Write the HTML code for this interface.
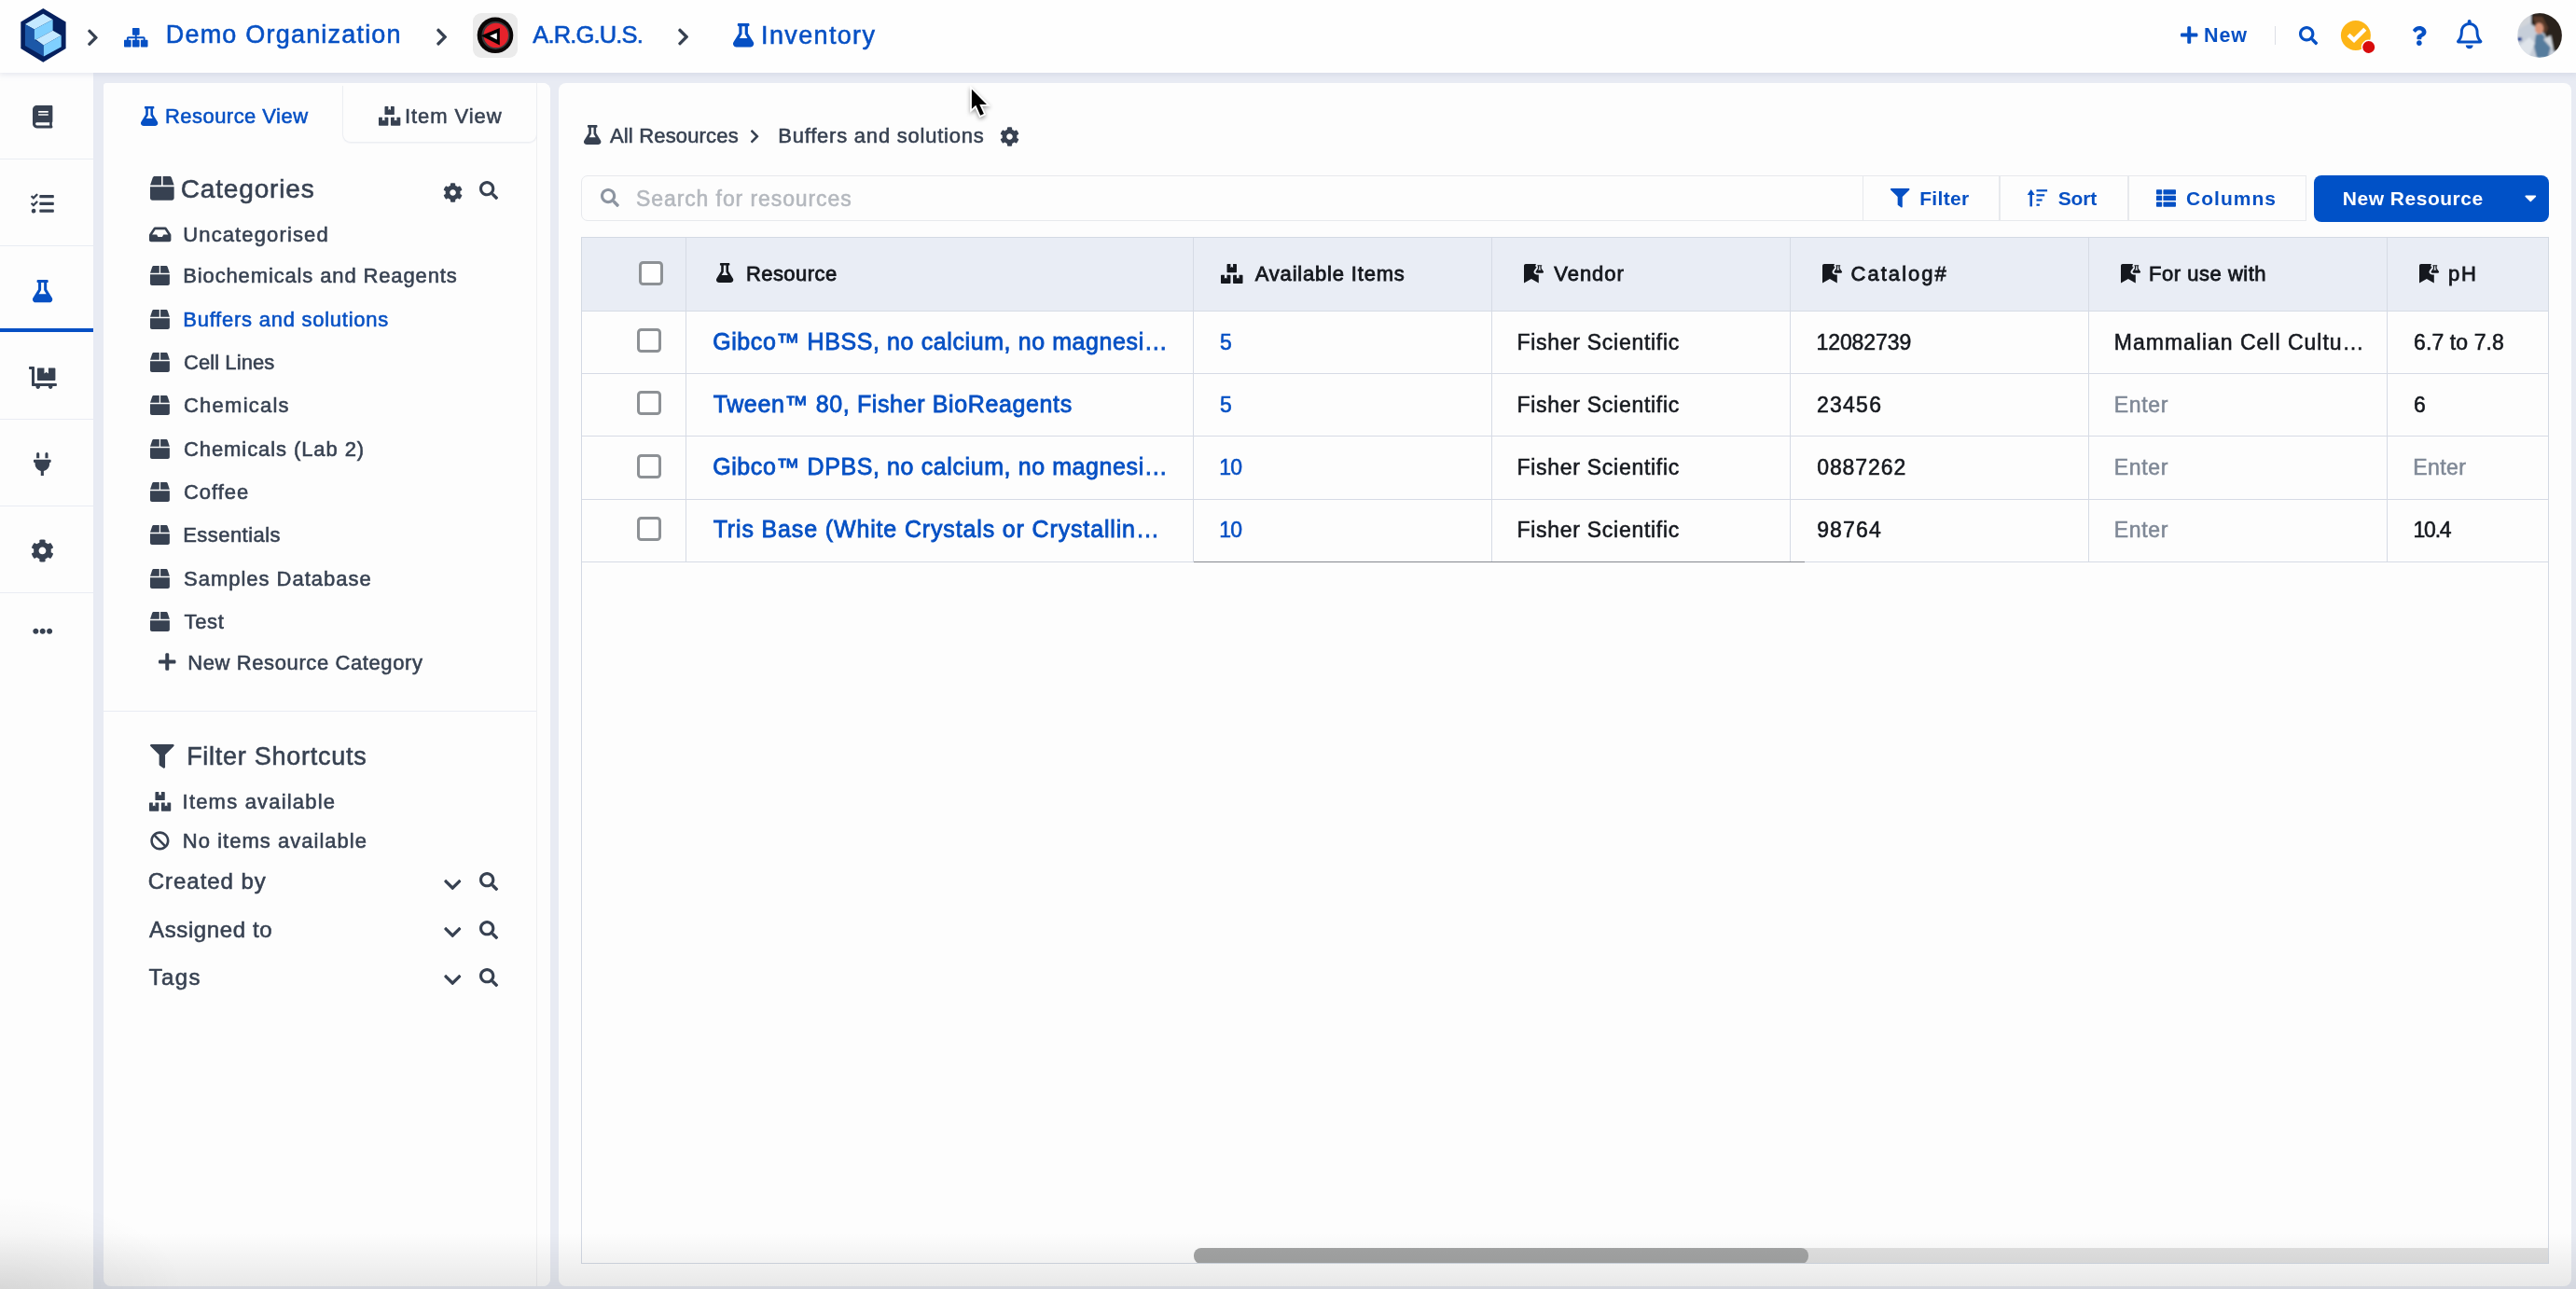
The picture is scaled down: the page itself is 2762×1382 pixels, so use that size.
<!DOCTYPE html>
<html lang="en">
<head>
<meta charset="utf-8">
<title>Inventory - Buffers and solutions</title>
<style>
html,body{margin:0;padding:0}
body{will-change:transform;width:2762px;height:1382px;position:relative;overflow:hidden;background:#e8ebf3;font-family:"Liberation Sans", sans-serif;-webkit-font-smoothing:antialiased}
ul,li{margin:0;padding:0;list-style:none}
.ic{position:absolute;display:block;overflow:visible}
.t{position:absolute;white-space:nowrap;line-height:1;-webkit-text-stroke:.55px currentColor}
header.top{position:absolute;left:0;top:0;width:2762px;height:78px;background:#fefefe;box-shadow:0 1px 6px 1px rgba(170,176,200,.28);z-index:3}
nav.side{position:absolute;left:0;top:0;width:100px;height:1382px;background:#fdfdfd;z-index:2}
.hdiv{position:absolute;height:1px;background:#e9ecf3}
.vdiv{position:absolute;width:1px;background:#dcdfe5}
.active{position:absolute;background:#0650c4}
.bg-lp{position:absolute;left:111px;top:89px;width:479px;height:1289.5px;border-radius:3px 8px 8px 8px;background:#fdfdfd}
.bg-lp-strip{position:absolute;left:575px;top:89px;width:15px;height:1289.5px;border-radius:0 8px 8px 0;border-left:1px solid #eeeff1;box-sizing:border-box;background:#fdfdfd}
.bg-mp{position:absolute;left:599px;top:89px;width:2158px;height:1289.5px;border-radius:8px;background:#fdfdfd}
.tab2{position:absolute;left:367px;top:92px;width:209px;height:61px;box-sizing:border-box;border:1px solid #eceef2;border-top:none;border-radius:0 0 9px 9px;background:#fdfdfd;box-shadow:0 1px 1px rgba(215,220,232,.25)}
.lp-inner-border{display:none}
.search{position:absolute;left:623px;top:188px;width:1375px;height:49px;box-sizing:border-box;border:1px solid #e7e9ed;border-radius:7px 0 0 7px;background:#fdfdfd}
.tbtn{position:absolute;top:188px;height:49px;box-sizing:border-box;border:1px solid #e7e9ed;background:#fdfdfd}
.newbtn{position:absolute;left:2481px;top:187.8px;width:252.300px;height:50.2px;border-radius:8px;background:#0051c7}
.tbl{position:absolute;left:623px;top:254px;width:2110px;height:1100.5px;box-sizing:border-box;border:1px solid #d3d9e3;background:#fdfdfd;overflow:hidden}
.thead{position:absolute;left:0;top:0;width:100%;height:79px;background:#e9edf5}
.rline{position:absolute;left:0;width:100%;height:1px;background:#d6dbe5;margin-top:-1px}
.cline{position:absolute;top:0;height:348px;width:1px;background:#d6dbe5;margin-left:-1px}
.sbtrack{position:absolute;left:1300px;width:810px;top:1083px;height:16.5px;background:#e1e1e1}
.sbthumb{position:absolute;left:656px;width:659px;top:1083px;height:16.5px;border-radius:8px;background:#a3a4a4}
.stickyline{position:absolute;left:656px;width:655px;top:347.2px;height:1.2px;background:#85888e}
.cb{position:absolute;width:26px;height:26px;box-sizing:border-box;border:3px solid #8d9195;border-radius:4.5px;background:#fefefe}
.vig{position:absolute;left:0;top:1322px;width:2762px;height:60px;background:linear-gradient(180deg,rgba(0,0,0,0),rgba(0,0,0,.085));z-index:5;pointer-events:none}
.vig2{position:absolute;left:0;top:1282px;width:200px;height:100px;background:radial-gradient(ellipse at 0% 100%,rgba(0,0,0,.07),rgba(0,0,0,0) 70%);z-index:5;pointer-events:none}

</style>
</head>
<body>
<div class="bg-lp"></div><div class="bg-lp-strip"></div><div class="bg-mp"></div>
<nav class="side">
<div class="hdiv" style="left:0;top:170px;width:100px"></div>
<div class="hdiv" style="left:0;top:263px;width:100px"></div>
<div class="hdiv" style="left:0;top:448.5px;width:100px"></div>
<div class="hdiv" style="left:0;top:542px;width:100px"></div>
<div class="hdiv" style="left:0;top:635px;width:100px"></div>
<div class="active" style="left:0;top:351.5px;width:100px;height:4px"></div>
<svg class="ic" style="left:34.86px;top:113.43px" width="21.38" height="24.44" viewBox="0 0 448 512"><path fill="#374151" d="M448 360V24c0-13.300-10.700-24-24-24H96C43 0 0 43 0 96v320c0 53 43 96 96 96h328c13.300 0 24-10.700 24-24v-16c0-7.500-3.500-14.300-8.900-18.700-4.200-15.400-4.200-59.300 0-74.700 5.400-4.300 8.900-11.100 8.900-18.600zM128 134c0-3.300 2.700-6 6-6h212c3.300 0 6 2.700 6 6v20c0 3.300-2.700 6-6 6H134c-3.300 0-6-2.700-6-6v-20zm0 64c0-3.300 2.700-6 6-6h212c3.300 0 6 2.700 6 6v20c0 3.300-2.700 6-6 6H134c-3.300 0-6-2.700-6-6v-20zm253.400 250H96c-17.700 0-32-14.300-32-32 0-17.600 14.400-32 32-32h285.400c-1.900 17.100-1.900 46.900 0 64z"/></svg>
<svg class="ic" style="left:33.39px;top:206.37px" width="24.83" height="24.83" viewBox="0 0 512 512"><path fill="#374151" d="M139.610 35.500a12 12 0 0 0-17 0L58.930 98.810l-22.700-22.120a12 12 0 0 0-17 0L3.530 92.410a12 12 0 0 0 0 17l47.590 47.400a12.780 12.780 0 0 0 17.610 0l15.590-15.620L156.520 69a12.090 12.090 0 0 0 .09-17zm0 159.190a12 12 0 0 0-17 0l-63.680 63.720-22.700-22.100a12 12 0 0 0-17 0L3.530 252a12 12 0 0 0 0 17L51 316.500a12.770 12.770 0 0 0 17.600 0l15.700-15.690 72.200-72.220a12 12 0 0 0 .09-16.900zM64 368c-26.490 0-48.590 21.500-48.590 48S37.530 464 64 464a48 48 0 0 0 0-96zm432 16H208a16 16 0 0 0-16 16v32a16 16 0 0 0 16 16h288a16 16 0 0 0 16-16v-32a16 16 0 0 0-16-16zm0-320H208a16 16 0 0 0-16 16v32a16 16 0 0 0 16 16h288a16 16 0 0 0 16-16V80a16 16 0 0 0-16-16zm0 160H208a16 16 0 0 0-16 16v32a16 16 0 0 0 16 16h288a16 16 0 0 0 16-16v-32a16 16 0 0 0-16-16z"/></svg>
<svg class="ic" style="left:34.92px;top:299.66px" width="21.25" height="24.29" viewBox="0 0 448 512"><path fill="#0650c4" d="M437.2 403.5L320 215V64h8c13.3 0 24-10.7 24-24V24c0-13.3-10.7-24-24-24H120c-13.3 0-24 10.7-24 24v16c0 13.3 10.7 24 24 24h8v151L10.8 403.5C-18.5 450.6 15.3 512 70.9 512h306.2c55.700 0 89.400-61.500 60.100-108.500zM137.900 320l48.200-77.600c3.700-5.200 5.800-11.600 5.800-18.400V64h64v160c0 6.900 2.200 13.200 5.800 18.400l48.200 77.600h-172z"/></svg>
<svg class="ic" style="left:31.20px;top:392.84px" width="29.90" height="23.92" viewBox="0 0 640 512"><path fill="#374151" d="M208 320h384c8.800 0 16-7.200 16-16V48c0-8.800-7.200-16-16-16H448v128l-48-32-48 32V32H208c-8.800 0-16 7.200-16 16v256c0 8.800 7.200 16 16 16zm416 64H128V16c0-8.800-7.200-16-16-16H16C7.200 0 0 7.200 0 16v32c0 8.800 7.200 16 16 16h48v368c0 8.800 7.200 16 16 16h82.900c-1.800 5-2.900 10.400-2.900 16 0 26.500 21.500 48 48 48s48-21.500 48-48c0-5.600-1.200-11-2.900-16H451c-1.800 5-2.900 10.400-2.900 16 0 26.500 21.500 48 48 48s48-21.500 48-48c0-5.600-1.200-11-2.900-16H624c8.800 0 16-7.200 16-16v-32c0-8.800-7.200-16-16-16z"/></svg>
<svg class="ic" style="left:36.37px;top:485.21px" width="18.66" height="24.88" viewBox="0 0 384 512"><path fill="#374151" d="M320 32a32 32 0 0 0-64 0v96h64zm48 128H16a16 16 0 0 0-16 16v32a16 16 0 0 0 16 16h16v32a160.070 160.070 0 0 0 128 156.800V512h64v-99.200A160.070 160.070 0 0 0 352 256v-32h16a16 16 0 0 0 16-16v-32a16 16 0 0 0-16-16zM128 32a32 32 0 0 0-64 0v96h64z"/></svg>
<svg class="ic" style="left:33.24px;top:578.14px" width="24.93" height="24.93" viewBox="0 0 512 512"><path fill="#374151" d="M487.400 315.700l-42.600-24.600c4.300-23.200 4.300-47 0-70.200l42.600-24.600c4.900-2.800 7.100-8.600 5.500-14-11.100-35.600-30-67.800-54.700-94.600-3.800-4.100-10-5.100-14.800-2.300L380.800 110c-17.900-15.400-38.500-27.300-60.800-35.100V25.800c0-5.600-3.900-10.500-9.400-11.700-36.700-8.200-74.300-7.800-109.200 0-5.500 1.200-9.400 6.100-9.400 11.700V75c-22.200 7.900-42.800 19.800-60.800 35.100L88.700 85.500c-4.900-2.800-11-1.900-14.800 2.300-24.700 26.700-43.600 58.900-54.700 94.600-1.700 5.400.6 11.200 5.500 14L67.300 221c-4.300 23.200-4.300 47 0 70.200l-42.600 24.600c-4.900 2.800-7.100 8.600-5.500 14 11.100 35.600 30 67.800 54.700 94.600 3.800 4.100 10 5.100 14.800 2.300l42.600-24.600c17.900 15.400 38.500 27.300 60.800 35.100v49.200c0 5.600 3.900 10.500 9.400 11.700 36.700 8.200 74.300 7.800 109.200 0 5.500-1.200 9.400-6.100 9.400-11.700v-49.200c22.200-7.900 42.800-19.800 60.800-35.100l42.600 24.600c4.900 2.800 11 1.900 14.800-2.300 24.700-26.700 43.600-58.900 54.700-94.600 1.500-5.500-.7-11.300-5.600-14.100zM256 336c-44.100 0-80-35.900-80-80s35.900-80 80-80 80 35.900 80 80-35.900 80-80 80z"/></svg>
<svg class="ic" style="left:34.66px;top:666.36px" width="21.48" height="21.48" viewBox="0 0 512 512"><path fill="#374151" d="M328 256c0 39.800-32.200 72-72 72s-72-32.200-72-72 32.200-72 72-72 72 32.200 72 72zm104-72c-39.800 0-72 32.200-72 72s32.200 72 72 72 72-32.200 72-72-32.200-72-72-72zm-352 0c-39.800 0-72 32.200-72 72s32.200 72 72 72 72-32.200 72-72-32.200-72-72-72z"/></svg>
</nav>
<header class="top">
<svg class="ic" style="left:20px;top:6px" width="54" height="64" viewBox="20 6 54 64">
<polygon points="46.3,9.1 70.6,23.5 70.6,52.1 46.3,66.7 22.3,52.1 22.3,23.5" fill="#05205e"/>
<polygon points="46.3,14.8 56.6,20.9 36.9,31.5 26.9,26" fill="#c4e9ff"/>
<polygon points="26.9,26 36.9,31.5 36.9,42.4 46.9,48.4 46.9,60.5 26.9,49" fill="#1c58a8"/>
<polygon points="36.9,31.5 56.6,20.9 56.6,32.7 38.5,42.6 36.9,42.4" fill="#7fd0ff"/>
<polygon points="38.5,42.6 56.6,32.7 65.7,38.1 46.9,48.4" fill="#c4e9ff"/>
<polygon points="46.9,48.4 65.7,38.1 65.7,50.2 46.9,60.5" fill="#7fd0ff"/>
</svg>
<svg class="ic" style="left:93.05px;top:29.68px" width="12.90" height="20.64" viewBox="0 0 320 512"><path fill="#374151" d="M285.476 272.971L91.132 467.314c-9.373 9.373-24.569 9.373-33.941 0l-22.667-22.667c-9.357-9.357-9.375-24.522-.04-33.901L188.505 256 34.484 101.255c-9.335-9.379-9.317-24.544.04-33.901l22.667-22.667c9.373-9.373 24.569-9.373 33.941 0L285.475 239.030c9.373 9.372 9.373 24.568.001 33.941z"/></svg>
<svg class="ic" style="left:133.25px;top:29.80px" width="25.50" height="20.40" viewBox="0 0 640 512"><path fill="#0650c4" d="M616 320h-48v-48c0-22.056-17.944-40-40-40H344v-40h48c13.255 0 24-10.745 24-24V24c0-13.255-10.745-24-24-24H248c-13.255 0-24 10.745-24 24v144c0 13.255 10.745 24 24 24h48v40H112c-22.056 0-40 17.944-40 40v48H24c-13.255 0-24 10.745-24 24v144c0 13.255 10.745 24 24 24h144c13.255 0 24-10.745 24-24V344c0-13.255-10.745-24-24-24h-48v-40h176v40h-48c-13.255 0-24 10.745-24 24v144c0 13.255 10.745 24 24 24h144c13.255 0 24-10.745 24-24V344c0-13.255-10.745-24-24-24h-48v-40h176v40h-48c-13.255 0-24 10.745-24 24v144c0 13.255 10.745 24 24 24h144c13.255 0 24-10.745 24-24V344c0-13.255-10.745-24-24-24z"/></svg>
<span class="t " id="t0" style="left:177.75px;top:24.00px;color:#0650c4;font-size:27.0px;letter-spacing:1.203px;">Demo Organization</span>
<svg class="ic" style="left:466.50px;top:29.32px" width="13.29" height="21.27" viewBox="0 0 320 512"><path fill="#374151" d="M285.476 272.971L91.132 467.314c-9.373 9.373-24.569 9.373-33.941 0l-22.667-22.667c-9.357-9.357-9.375-24.522-.04-33.901L188.505 256 34.484 101.255c-9.335-9.379-9.317-24.544.04-33.901l22.667-22.667c9.373-9.373 24.569-9.373 33.941 0L285.475 239.030c9.373 9.372 9.373 24.568.001 33.941z"/></svg>
<svg class="ic" style="left:507px;top:14px" width="48" height="48" viewBox="507 14 48 48">
<rect x="507" y="14" width="48" height="48" rx="9" fill="#ebebeb"/>
<circle cx="531" cy="37.8" r="19.3" fill="#0a0606"/>
<circle cx="531.5" cy="37.9" r="15" fill="#3b3b3d"/>
<circle cx="531.8" cy="37.9" r="13.2" fill="#e6222b"/>
<polygon points="515.8,38.3 535.8,29.9 535.8,48.5 " fill="#000"/>
<polygon points="525.1,38.6 532.8,35.3 532.8,42.6" fill="#fff"/>
</svg>
<span class="t ns" id="t1" style="left:571.30px;top:25.00px;color:#0650c4;font-size:25.5px;letter-spacing:-0.839px;">A.R.G.U.S.</span>
<svg class="ic" style="left:725.86px;top:29.41px" width="13.17" height="21.07" viewBox="0 0 320 512"><path fill="#374151" d="M285.476 272.971L91.132 467.314c-9.373 9.373-24.569 9.373-33.941 0l-22.667-22.667c-9.357-9.357-9.375-24.522-.04-33.901L188.505 256 34.484 101.255c-9.335-9.379-9.317-24.544.04-33.901l22.667-22.667c9.373-9.373 24.569-9.373 33.941 0L285.475 239.030c9.373 9.372 9.373 24.568.001 33.941z"/></svg>
<svg class="ic" style="left:786.01px;top:24.67px" width="22.27" height="25.46" viewBox="0 0 448 512"><path fill="#0650c4" d="M437.2 403.5L320 215V64h8c13.3 0 24-10.7 24-24V24c0-13.3-10.7-24-24-24H120c-13.3 0-24 10.7-24 24v16c0 13.3 10.7 24 24 24h8v151L10.8 403.5C-18.5 450.6 15.3 512 70.9 512h306.2c55.700 0 89.400-61.500 60.100-108.500zM137.900 320l48.200-77.600c3.700-5.200 5.800-11.600 5.800-18.400V64h64v160c0 6.900 2.200 13.200 5.800 18.400l48.200 77.600h-172z"/></svg>
<span class="t " id="t2" style="left:816.10px;top:25.00px;color:#0650c4;font-size:27.0px;letter-spacing:1.350px;">Inventory</span>
<svg class="ic" style="left:2337.62px;top:26.76px" width="18.45" height="21.09" viewBox="0 0 448 512"><path fill="#0650c4" d="M416 208H272V64c0-17.670-14.330-32-32-32h-32c-17.670 0-32 14.330-32 32v144H32c-17.670 0-32 14.330-32 32v32c0 17.670 14.330 32 32 32h144v144c0 17.670 14.330 32 32 32h32c17.670 0 32-14.330 32-32V304h144c17.670 0 32-14.330 32-32v-32c0-17.670-14.330-32-32-32z"/></svg>
<span class="t " id="t3" style="left:2363.00px;top:28.00px;color:#0650c4;font-size:21.5px;font-weight:700;-webkit-text-stroke:0;letter-spacing:0.875px;">New</span>
<div class="vdiv" style="left:2438.5px;top:28px;height:20px"></div>
<svg class="ic" style="left:2464.90px;top:27.90px" width="20.20" height="20.20" viewBox="0 0 512 512"><path fill="#0650c4" d="M505 442.7L405.3 343c-4.500-4.500-10.600-7-17-7H372c27.600-35.300 44-79.700 44-128C416 93.100 322.900 0 208 0S0 93.100 0 208s93.100 208 208 208c48.300 0 92.700-16.400 128-44v16.300c0 6.400 2.500 12.500 7 17l99.700 99.700c9.400 9.400 24.600 9.400 33.900 0l28.300-28.300c9.400-9.400 9.400-24.600.1-34zM208 336c-70.700 0-128-57.200-128-128 0-70.700 57.200-128 128-128 70.700 0 128 57.200 128 128 0 70.700-57.200 128-128 128z"/></svg>
<svg class="ic" style="left:2506px;top:18px" width="44" height="44" viewBox="2506 18 44 44">
<circle cx="2525.9" cy="38" r="16" fill="#fdb517"/>
<polyline points="2518,37.4 2524,43 2535.8,31.2" fill="none" stroke="#fff" stroke-width="4.4"/>
<circle cx="2539.7" cy="50.5" r="7.9" fill="#fff"/>
<circle cx="2539.700" cy="50.5" r="6.5" fill="#d80c0c"/>
</svg>
<svg class="ic" style="left:2585.62px;top:27.73px" width="15.78" height="21.04" viewBox="0 0 384 512"><path fill="#0650c4" d="M202.021 0C122.202 0 70.503 32.703 29.914 91.026c-7.363 10.580-5.093 25.086 5.178 32.874l43.138 32.709c10.373 7.865 25.132 6.026 33.253-4.148 25.049-31.381 43.630-49.449 82.757-49.449 30.764 0 68.816 19.799 68.816 49.631 0 22.552-18.617 34.134-48.993 51.164-35.423 19.860-82.299 44.576-82.299 106.405V320c0 13.255 10.745 24 24 24h72.471c13.255 0 24-10.745 24-24v-5.773c0-42.860 125.268-44.645 125.268-160.627C377.504 66.256 286.902 0 202.021 0zM192 373.459c-38.196 0-69.271 31.075-69.271 69.271 0 38.195 31.075 69.270 69.271 69.270s69.271-31.075 69.271-69.271-31.075-69.270-69.271-69.270z"/></svg>
<svg class="ic" style="left:2634.28px;top:21.37px" width="27.43" height="31.35" viewBox="0 0 448 512"><path fill="#0650c4" d="M439.390 362.290c-19.320-20.760-55.470-51.990-55.470-154.290 0-77.700-54.480-139.900-127.940-155.160V32c0-17.670-14.320-32-31.980-32s-31.980 14.330-31.980 32v20.840C118.560 68.100 64.080 130.300 64.080 208c0 102.300-36.150 133.530-55.470 154.290-6 6.450-8.660 14.160-8.610 21.710.11 16.400 12.980 32 32.100 32h383.800c19.120 0 32-15.600 32.100-32 .05-7.550-2.610-15.270-8.610-21.710zM67.530 368c21.220-27.970 44.420-74.330 44.530-159.420 0-.2-.06-.38-.06-.58 0-61.860 50.140-112 112-112s112 50.140 112 112c0 .2-.06.38-.06.58.11 85.100 23.310 131.460 44.530 159.420H67.530zM224 512c35.320 0 63.970-28.650 63.970-64H160.030c0 35.350 28.650 64 63.970 64z"/></svg>
<svg class="ic" style="left:2699px;top:14px" width="48" height="48" viewBox="2699 14 48 48">
<defs><clipPath id="av"><circle cx="2723" cy="38" r="23.9"/></clipPath></defs>
<defs><filter id="avb" x="-10%" y="-10%" width="120%" height="120%"><feGaussianBlur stdDeviation="0.9"/></filter></defs><g clip-path="url(#av)"><g filter="url(#avb)">
<rect x="2699" y="14" width="48" height="48" fill="#c6ced9"/>
<polygon points="2713,24 2699,32 2699,14 2713,14" fill="#d2d5da"/>
<polygon points="2714,14 2714,26 2716,27 2727.7,35.8 2738,54.5 2750,56 2750,10" fill="#2a241d"/>
<polygon points="2716,18 2726,18 2732,30 2729,36 2720,30" fill="#5a3a2c"/>
<ellipse cx="2722.5" cy="30.5" rx="4.6" ry="6" fill="#d8957a"/>
<polygon points="2719,37 2726,36 2735,50 2732,62 2720,62 2717,50" fill="#4a7396" opacity=".9"/>
<polygon points="2700,50 2712,40 2718,46 2712,60 2703,58" fill="#dfe4ea"/>
<polygon points="2727,42 2735,38 2738,54 2734,50" fill="#d5d9df"/>
<rect x="2699" y="40" width="5" height="4" fill="#28509a"/>
</g></g></svg>
</header>
<aside class="panel lp">
<div class="tab2"></div>
<div class="lp-inner-border"></div>
<svg class="ic" style="left:151.17px;top:113.81px" width="18.27" height="20.88" viewBox="0 0 448 512"><path fill="#0650c4" d="M437.2 403.5L320 215V64h8c13.3 0 24-10.7 24-24V24c0-13.3-10.7-24-24-24H120c-13.3 0-24 10.7-24 24v16c0 13.3 10.7 24 24 24h8v151L10.8 403.5C-18.5 450.6 15.3 512 70.9 512h306.2c55.700 0 89.400-61.500 60.100-108.500zM137.900 320l48.200-77.600c3.700-5.200 5.800-11.600 5.800-18.400V64h64v160c0 6.900 2.200 13.200 5.800 18.400l48.200 77.600h-172z"/></svg>
<span class="t " id="t4" style="left:176.95px;top:114.00px;color:#0650c4;font-size:22.0px;letter-spacing:0.463px;">Resource View</span>
<svg class="ic" style="left:405.93px;top:113.88px" width="23.33" height="20.74" viewBox="0 0 576 512"><path fill="#374151" d="M560 288h-80v96l-32-21.300-32 21.300v-96h-80c-8.800 0-16 7.200-16 16v192c0 8.800 7.200 16 16 16h224c8.800 0 16-7.200 16-16V304c0-8.800-7.200-16-16-16zm-384-64h224c8.800 0 16-7.200 16-16V16c0-8.800-7.200-16-16-16h-80v96l-32-21.300L256 96V0h-80c-8.800 0-16 7.200-16 16v192c0 8.800 7.200 16 16 16zm64 64h-80v96l-32-21.300L96 384v-96H16c-8.800 0-16 7.200-16 16v192c0 8.800 7.200 16 16 16h224c8.800 0 16-7.200 16-16V304c0-8.800-7.200-16-16-16z"/></svg>
<span class="t " id="t5" style="left:434.00px;top:114.00px;color:#374151;font-size:22.0px;letter-spacing:0.919px;">Item View</span>
<svg class="ic" style="left:161.47px;top:189.42px" width="25.65" height="25.65" viewBox="0 0 512 512"><path fill="#374151" d="M509.5 184.600L458.900 32.800C452.400 13.200 434.100 0 413.400 0H272v192h238.700c-.4-2.500-.4-5-1.200-7.400zM240 0H98.600c-20.700 0-39 13.200-45.500 32.800L2.500 184.600c-.8 2.400-.8 4.900-1.200 7.400H240V0zM0 224v240c0 26.500 21.500 48 48 48h416c26.500 0 48-21.500 48-48V224H0z"/></svg>
<span class="t " id="t6" style="left:193.80px;top:189.00px;color:#374151;font-size:28.0px;letter-spacing:0.833px;">Categories</span>
<svg class="ic" style="left:474.99px;top:196.39px" width="21.13" height="21.13" viewBox="0 0 512 512"><path fill="#374151" d="M487.400 315.700l-42.600-24.600c4.300-23.200 4.300-47 0-70.200l42.600-24.600c4.900-2.800 7.100-8.600 5.500-14-11.100-35.600-30-67.800-54.700-94.600-3.800-4.100-10-5.100-14.800-2.300L380.800 110c-17.900-15.400-38.500-27.300-60.800-35.100V25.800c0-5.600-3.900-10.500-9.400-11.700-36.700-8.200-74.300-7.800-109.200 0-5.500 1.200-9.400 6.100-9.400 11.700V75c-22.200 7.900-42.800 19.800-60.800 35.100L88.700 85.500c-4.900-2.800-11-1.900-14.800 2.300-24.700 26.700-43.600 58.900-54.700 94.600-1.700 5.400.6 11.200 5.500 14L67.300 221c-4.300 23.200-4.300 47 0 70.200l-42.600 24.600c-4.900 2.800-7.100 8.600-5.500 14 11.100 35.600 30 67.800 54.700 94.600 3.800 4.100 10 5.100 14.800 2.300l42.600-24.600c17.900 15.400 38.500 27.300 60.800 35.100v49.200c0 5.600 3.900 10.500 9.400 11.700 36.700 8.200 74.300 7.800 109.200 0 5.500-1.200 9.400-6.100 9.400-11.700v-49.200c22.200-7.900 42.800-19.800 60.800-35.100l42.600 24.600c4.900 2.800 11 1.900 14.800-2.300 24.700-26.700 43.600-58.900 54.700-94.600 1.500-5.500-.7-11.300-5.600-14.100zM256 336c-44.100 0-80-35.900-80-80s35.900-80 80-80 80 35.900 80 80-35.900 80-80 80z"/></svg>
<svg class="ic" style="left:513.68px;top:194.42px" width="20.05" height="20.05" viewBox="0 0 512 512"><path fill="#374151" d="M505 442.7L405.3 343c-4.500-4.500-10.600-7-17-7H372c27.600-35.300 44-79.700 44-128C416 93.100 322.900 0 208 0S0 93.100 0 208s93.100 208 208 208c48.300 0 92.700-16.400 128-44v16.300c0 6.400 2.500 12.500 7 17l99.700 99.700c9.400 9.400 24.600 9.400 33.900 0l28.300-28.300c9.400-9.400 9.400-24.600.1-34zM208 336c-70.700 0-128-57.200-128-128 0-70.700 57.200-128 128-128 70.700 0 128 57.200 128 128 0 70.700-57.200 128-128 128z"/></svg>
<ul class="cats">
<li>
<svg class="ic" style="left:159.70px;top:240.60px" width="23.40" height="20.80" viewBox="0 0 576 512"><path fill="#374151" d="M567.938 243.908L462.250 85.374A48.003 48.003 0 0 0 422.311 64H153.689a48 48 0 0 0-39.938 21.374L8.062 243.908A47.994 47.994 0 0 0 0 270.533V400c0 26.510 21.490 48 48 48h480c26.510 0 48-21.490 48-48V270.533a47.994 47.994 0 0 0-8.062-26.625zM162.252 128h251.497l85.333 128H376l-32 64H232l-32-64H76.918l85.334-128z"/></svg>
<span class="t " id="t7" style="left:196.25px;top:241.00px;color:#374151;font-size:22.0px;letter-spacing:1.129px;">Uncategorised</span>
</li>
<li>
<svg class="ic" style="left:161.15px;top:284.85px" width="20.90" height="20.90" viewBox="0 0 512 512"><path fill="#374151" d="M509.5 184.600L458.900 32.800C452.400 13.200 434.100 0 413.400 0H272v192h238.700c-.4-2.500-.4-5-1.200-7.400zM240 0H98.600c-20.700 0-39 13.200-45.500 32.800L2.500 184.600c-.8 2.400-.8 4.900-1.200 7.400H240V0zM0 224v240c0 26.500 21.500 48 48 48h416c26.500 0 48-21.500 48-48V224H0z"/></svg>
<span class="t " id="t8" style="left:196.25px;top:285.00px;color:#374151;font-size:22.0px;letter-spacing:0.865px;">Biochemicals and Reagents</span>
</li>
<li>
<svg class="ic" style="left:161.15px;top:331.85px" width="20.90" height="20.90" viewBox="0 0 512 512"><path fill="#374151" d="M509.5 184.600L458.900 32.800C452.400 13.200 434.100 0 413.400 0H272v192h238.700c-.4-2.500-.4-5-1.200-7.400zM240 0H98.600c-20.700 0-39 13.200-45.500 32.800L2.500 184.600c-.8 2.400-.8 4.900-1.200 7.400H240V0zM0 224v240c0 26.500 21.500 48 48 48h416c26.500 0 48-21.500 48-48V224H0z"/></svg>
<span class="t " id="t9" style="left:196.25px;top:332.00px;color:#0650c4;font-size:22.0px;letter-spacing:0.750px;">Buffers and solutions</span>
</li>
<li>
<svg class="ic" style="left:161.15px;top:377.65px" width="20.90" height="20.90" viewBox="0 0 512 512"><path fill="#374151" d="M509.5 184.600L458.900 32.800C452.400 13.200 434.100 0 413.400 0H272v192h238.700c-.4-2.500-.4-5-1.200-7.400zM240 0H98.600c-20.700 0-39 13.200-45.500 32.800L2.500 184.600c-.8 2.400-.8 4.900-1.200 7.400H240V0zM0 224v240c0 26.500 21.500 48 48 48h416c26.500 0 48-21.500 48-48V224H0z"/></svg>
<span class="t " id="t10" style="left:197.00px;top:378.00px;color:#374151;font-size:22.0px;letter-spacing:0.072px;">Cell Lines</span>
</li>
<li>
<svg class="ic" style="left:161.15px;top:423.65px" width="20.90" height="20.90" viewBox="0 0 512 512"><path fill="#374151" d="M509.5 184.600L458.900 32.800C452.400 13.200 434.100 0 413.400 0H272v192h238.700c-.4-2.500-.4-5-1.200-7.400zM240 0H98.600c-20.700 0-39 13.200-45.500 32.800L2.500 184.600c-.8 2.400-.8 4.900-1.200 7.400H240V0zM0 224v240c0 26.500 21.500 48 48 48h416c26.500 0 48-21.500 48-48V224H0z"/></svg>
<span class="t " id="t11" style="left:197.00px;top:424.00px;color:#374151;font-size:22.0px;letter-spacing:1.237px;">Chemicals</span>
</li>
<li>
<svg class="ic" style="left:161.15px;top:470.85px" width="20.90" height="20.90" viewBox="0 0 512 512"><path fill="#374151" d="M509.5 184.600L458.900 32.800C452.400 13.200 434.100 0 413.400 0H272v192h238.700c-.4-2.500-.4-5-1.200-7.400zM240 0H98.600c-20.700 0-39 13.200-45.500 32.800L2.500 184.600c-.8 2.400-.8 4.900-1.200 7.400H240V0zM0 224v240c0 26.500 21.500 48 48 48h416c26.500 0 48-21.500 48-48V224H0z"/></svg>
<span class="t " id="t12" style="left:197.00px;top:471.00px;color:#374151;font-size:22.0px;letter-spacing:0.916px;">Chemicals (Lab 2)</span>
</li>
<li>
<svg class="ic" style="left:161.15px;top:516.55px" width="20.90" height="20.90" viewBox="0 0 512 512"><path fill="#374151" d="M509.5 184.600L458.900 32.800C452.400 13.200 434.100 0 413.400 0H272v192h238.700c-.4-2.500-.4-5-1.200-7.400zM240 0H98.600c-20.700 0-39 13.200-45.500 32.800L2.500 184.600c-.8 2.400-.8 4.900-1.200 7.400H240V0zM0 224v240c0 26.500 21.500 48 48 48h416c26.500 0 48-21.500 48-48V224H0z"/></svg>
<span class="t " id="t13" style="left:197.00px;top:517.00px;color:#374151;font-size:22.0px;letter-spacing:0.980px;">Coffee</span>
</li>
<li>
<svg class="ic" style="left:161.15px;top:562.65px" width="20.90" height="20.90" viewBox="0 0 512 512"><path fill="#374151" d="M509.5 184.600L458.900 32.800C452.400 13.200 434.100 0 413.400 0H272v192h238.700c-.4-2.500-.4-5-1.200-7.400zM240 0H98.600c-20.700 0-39 13.200-45.500 32.800L2.500 184.600c-.8 2.400-.8 4.900-1.200 7.400H240V0zM0 224v240c0 26.500 21.500 48 48 48h416c26.500 0 48-21.500 48-48V224H0z"/></svg>
<span class="t " id="t14" style="left:196.25px;top:563.00px;color:#374151;font-size:22.0px;letter-spacing:0.439px;">Essentials</span>
</li>
<li>
<svg class="ic" style="left:161.15px;top:609.95px" width="20.90" height="20.90" viewBox="0 0 512 512"><path fill="#374151" d="M509.5 184.600L458.900 32.800C452.400 13.200 434.100 0 413.400 0H272v192h238.700c-.4-2.500-.4-5-1.200-7.400zM240 0H98.600c-20.700 0-39 13.200-45.500 32.800L2.500 184.600c-.8 2.400-.8 4.900-1.200 7.400H240V0zM0 224v240c0 26.500 21.500 48 48 48h416c26.500 0 48-21.500 48-48V224H0z"/></svg>
<span class="t " id="t15" style="left:197.00px;top:610.00px;color:#374151;font-size:22.0px;letter-spacing:0.987px;">Samples Database</span>
</li>
<li>
<svg class="ic" style="left:161.15px;top:655.55px" width="20.90" height="20.90" viewBox="0 0 512 512"><path fill="#374151" d="M509.5 184.600L458.900 32.800C452.400 13.200 434.100 0 413.400 0H272v192h238.700c-.4-2.500-.4-5-1.200-7.400zM240 0H98.600c-20.700 0-39 13.200-45.500 32.800L2.500 184.600c-.8 2.400-.8 4.900-1.200 7.400H240V0zM0 224v240c0 26.500 21.500 48 48 48h416c26.500 0 48-21.500 48-48V224H0z"/></svg>
<span class="t " id="t16" style="left:197.50px;top:656.00px;color:#374151;font-size:22.0px;letter-spacing:0.683px;">Test</span>
</li>
<li>
<svg class="ic" style="left:170.25px;top:699.43px" width="18.50" height="21.14" viewBox="0 0 448 512"><path fill="#374151" d="M416 208H272V64c0-17.670-14.330-32-32-32h-32c-17.670 0-32 14.330-32 32v144H32c-17.670 0-32 14.330-32 32v32c0 17.670 14.330 32 32 32h144v144c0 17.670 14.330 32 32 32h32c17.670 0 32-14.330 32-32V304h144c17.670 0 32-14.330 32-32v-32c0-17.670-14.330-32-32-32z"/></svg>
<span class="t " id="t17" style="left:201.25px;top:700.00px;color:#374151;font-size:22.0px;letter-spacing:0.603px;">New Resource Category</span>
</li></ul>
<div class="hdiv" style="left:111px;top:762px;width:464px"></div>
<svg class="ic" style="left:161.25px;top:797.65px" width="25.70" height="25.70" viewBox="0 0 512 512"><path fill="#374151" d="M487.976 0H24.028C2.710 0-8.047 25.866 7.058 40.971L192 225.941V432c0 7.831 3.821 15.170 10.237 19.662l80 55.980C298.020 518.690 320 507.493 320 487.980V225.941l184.947-184.970C520.021 25.896 509.338 0 487.976 0z"/></svg>
<span class="t " id="t18" style="left:200.15px;top:798.00px;color:#374151;font-size:27.0px;letter-spacing:0.730px;">Filter Shortcuts</span>
<svg class="ic" style="left:160.08px;top:848.92px" width="23.23" height="20.65" viewBox="0 0 576 512"><path fill="#374151" d="M560 288h-80v96l-32-21.300-32 21.300v-96h-80c-8.800 0-16 7.200-16 16v192c0 8.800 7.200 16 16 16h224c8.800 0 16-7.200 16-16V304c0-8.800-7.200-16-16-16zm-384-64h224c8.800 0 16-7.200 16-16V16c0-8.800-7.200-16-16-16h-80v96l-32-21.300L256 96V0h-80c-8.800 0-16 7.200-16 16v192c0 8.800 7.200 16 16 16zm64 64h-80v96l-32-21.300L96 384v-96H16c-8.800 0-16 7.200-16 16v192c0 8.800 7.200 16 16 16h224c8.800 0 16-7.200 16-16V304c0-8.800-7.200-16-16-16z"/></svg>
<span class="t " id="t19" style="left:195.60px;top:849.00px;color:#374151;font-size:22.0px;letter-spacing:1.189px;">Items available</span>
<svg class="ic" style="left:161.10px;top:891.45px" width="20.80" height="20.80" viewBox="0 0 512 512"><path fill="#374151" d="M256 8C119.034 8 8 119.033 8 256s111.034 248 248 248 248-111.034 248-248S392.967 8 256 8zm130.108 117.892c65.448 65.448 70 165.481 20.677 235.637L150.470 105.216c70.204-49.356 170.226-44.735 235.638 20.676zM125.892 386.108c-65.448-65.448-70-165.481-20.677-235.637L361.530 406.784c-70.203 49.356-170.226 44.736-235.638-20.676z"/></svg>
<span class="t " id="t20" style="left:195.85px;top:891.00px;color:#374151;font-size:22.0px;letter-spacing:1.024px;">No items available</span>
<span class="t " id="t21" style="left:158.75px;top:933.00px;color:#374151;font-size:24.0px;letter-spacing:0.967px;">Created by</span>
<svg class="ic" style="left:476.39px;top:937.81px" width="18.53" height="21.17" viewBox="0 0 448 512"><path fill="#374151" d="M207.029 381.476L12.686 187.132c-9.373-9.373-9.373-24.569 0-33.941l22.667-22.667c9.357-9.357 24.522-9.375 33.901-.04L224 284.505l154.745-154.021c9.379-9.335 24.544-9.317 33.901.04l22.667 22.667c9.373 9.373 9.373 24.569 0 33.941L240.971 381.476c-9.373 9.372-24.569 9.372-33.942 0z"/></svg>
<svg class="ic" style="left:513.67px;top:935.33px" width="20.15" height="20.15" viewBox="0 0 512 512"><path fill="#374151" d="M505 442.7L405.3 343c-4.500-4.500-10.600-7-17-7H372c27.600-35.300 44-79.700 44-128C416 93.100 322.900 0 208 0S0 93.100 0 208s93.100 208 208 208c48.300 0 92.700-16.400 128-44v16.300c0 6.400 2.500 12.500 7 17l99.700 99.700c9.400 9.400 24.600 9.400 33.900 0l28.300-28.300c9.400-9.400 9.400-24.600.1-34zM208 336c-70.700 0-128-57.200-128-128 0-70.700 57.200-128 128-128 70.700 0 128 57.200 128 128 0 70.700-57.200 128-128 128z"/></svg>
<span class="t " id="t22" style="left:160.00px;top:985.00px;color:#374151;font-size:24.0px;letter-spacing:0.630px;">Assigned to</span>
<svg class="ic" style="left:476.39px;top:989.31px" width="18.53" height="21.17" viewBox="0 0 448 512"><path fill="#374151" d="M207.029 381.476L12.686 187.132c-9.373-9.373-9.373-24.569 0-33.941l22.667-22.667c9.357-9.357 24.522-9.375 33.901-.04L224 284.505l154.745-154.021c9.379-9.335 24.544-9.317 33.901.04l22.667 22.667c9.373 9.373 9.373 24.569 0 33.941L240.971 381.476c-9.373 9.372-24.569 9.372-33.942 0z"/></svg>
<svg class="ic" style="left:513.67px;top:986.83px" width="20.15" height="20.15" viewBox="0 0 512 512"><path fill="#374151" d="M505 442.7L405.3 343c-4.500-4.500-10.600-7-17-7H372c27.600-35.300 44-79.700 44-128C416 93.100 322.900 0 208 0S0 93.100 0 208s93.100 208 208 208c48.300 0 92.700-16.400 128-44v16.300c0 6.400 2.500 12.500 7 17l99.700 99.700c9.400 9.400 24.600 9.400 33.900 0l28.300-28.300c9.400-9.400 9.400-24.600.1-34zM208 336c-70.700 0-128-57.200-128-128 0-70.700 57.200-128 128-128 70.700 0 128 57.200 128 128 0 70.700-57.200 128-128 128z"/></svg>
<span class="t " id="t23" style="left:159.50px;top:1036.00px;color:#374151;font-size:24.0px;letter-spacing:1.417px;">Tags</span>
<svg class="ic" style="left:476.39px;top:1040.41px" width="18.53" height="21.17" viewBox="0 0 448 512"><path fill="#374151" d="M207.029 381.476L12.686 187.132c-9.373-9.373-9.373-24.569 0-33.941l22.667-22.667c9.357-9.357 24.522-9.375 33.901-.04L224 284.505l154.745-154.021c9.379-9.335 24.544-9.317 33.901.04l22.667 22.667c9.373 9.373 9.373 24.569 0 33.941L240.971 381.476c-9.373 9.372-24.569 9.372-33.942 0z"/></svg>
<svg class="ic" style="left:513.67px;top:1037.92px" width="20.15" height="20.15" viewBox="0 0 512 512"><path fill="#374151" d="M505 442.7L405.3 343c-4.500-4.500-10.600-7-17-7H372c27.600-35.300 44-79.700 44-128C416 93.100 322.900 0 208 0S0 93.100 0 208s93.100 208 208 208c48.300 0 92.700-16.400 128-44v16.300c0 6.400 2.500 12.500 7 17l99.700 99.700c9.400 9.400 24.600 9.400 33.900 0l28.300-28.300c9.400-9.400 9.400-24.600.1-34zM208 336c-70.700 0-128-57.200-128-128 0-70.700 57.200-128 128-128 70.700 0 128 57.200 128 128 0 70.700-57.200 128-128 128z"/></svg>
</aside>
<main class="panel mp">
<svg class="ic" style="left:625.94px;top:134.37px" width="18.42" height="21.06" viewBox="0 0 448 512"><path fill="#374151" d="M437.2 403.5L320 215V64h8c13.3 0 24-10.7 24-24V24c0-13.3-10.7-24-24-24H120c-13.3 0-24 10.7-24 24v16c0 13.3 10.7 24 24 24h8v151L10.8 403.5C-18.5 450.6 15.3 512 70.9 512h306.2c55.700 0 89.400-61.500 60.100-108.500zM137.900 320l48.200-77.600c3.700-5.200 5.800-11.600 5.800-18.400V64h64v160c0 6.900 2.200 13.200 5.800 18.400l48.200 77.600h-172z"/></svg>
<span class="t " id="t24" style="left:653.90px;top:135.00px;color:#374151;font-size:22.0px;letter-spacing:0.175px;">All Resources</span>
<svg class="ic" style="left:804.28px;top:138.27px" width="10.34" height="16.55" viewBox="0 0 320 512"><path fill="#374151" d="M285.476 272.971L91.132 467.314c-9.373 9.373-24.569 9.373-33.941 0l-22.667-22.667c-9.357-9.357-9.375-24.522-.04-33.901L188.505 256 34.484 101.255c-9.335-9.379-9.317-24.544.04-33.901l22.667-22.667c9.373-9.373 24.569-9.373 33.941 0L285.475 239.030c9.373 9.372 9.373 24.568.001 33.941z"/></svg>
<span class="t " id="t25" style="left:834.25px;top:135.00px;color:#374151;font-size:22.0px;letter-spacing:0.775px;">Buffers and solutions</span>
<svg class="ic" style="left:1072.34px;top:136.04px" width="21.01" height="21.01" viewBox="0 0 512 512"><path fill="#374151" d="M487.400 315.700l-42.600-24.600c4.300-23.200 4.300-47 0-70.200l42.600-24.600c4.900-2.800 7.100-8.600 5.500-14-11.100-35.600-30-67.800-54.700-94.600-3.800-4.100-10-5.100-14.800-2.300L380.800 110c-17.900-15.400-38.500-27.300-60.800-35.100V25.800c0-5.600-3.900-10.500-9.400-11.700-36.700-8.200-74.300-7.800-109.200 0-5.500 1.200-9.400 6.100-9.400 11.700V75c-22.200 7.900-42.800 19.800-60.800 35.100L88.700 85.500c-4.900-2.800-11-1.900-14.800 2.300-24.700 26.700-43.600 58.900-54.700 94.600-1.700 5.400.6 11.200 5.500 14L67.300 221c-4.300 23.200-4.300 47 0 70.200l-42.600 24.600c-4.900 2.800-7.100 8.600-5.500 14 11.100 35.600 30 67.800 54.700 94.600 3.800 4.100 10 5.100 14.800 2.300l42.600-24.600c17.900 15.400 38.500 27.300 60.800 35.100v49.200c0 5.600 3.900 10.500 9.400 11.700 36.700 8.200 74.300 7.800 109.200 0 5.500-1.200 9.400-6.100 9.400-11.700v-49.200c22.200-7.900 42.800-19.800 60.800-35.100l42.600 24.600c4.900 2.800 11 1.900 14.800-2.300 24.700-26.700 43.600-58.900 54.700-94.600 1.500-5.500-.7-11.300-5.600-14.100zM256 336c-44.100 0-80-35.900-80-80s35.900-80 80-80 80 35.900 80 80-35.900 80-80 80z"/></svg>
<div class="search"></div>
<svg class="ic" style="left:643.92px;top:202.18px" width="19.95" height="19.95" viewBox="0 0 512 512"><path fill="#8d95a1" d="M505 442.7L405.3 343c-4.500-4.500-10.600-7-17-7H372c27.600-35.300 44-79.700 44-128C416 93.100 322.900 0 208 0S0 93.100 0 208s93.100 208 208 208c48.300 0 92.700-16.400 128-44v16.300c0 6.400 2.500 12.500 7 17l99.700 99.700c9.400 9.400 24.600 9.400 33.900 0l28.300-28.300c9.400-9.400 9.400-24.600.1-34zM208 336c-70.700 0-128-57.200-128-128 0-70.700 57.200-128 128-128 70.700 0 128 57.200 128 128 0 70.700-57.200 128-128 128z"/></svg>
<span class="t " id="t26" style="left:682.00px;top:202.00px;color:#b4b8be;font-size:23.0px;letter-spacing:0.908px;">Search for resources</span>
<div class="tbtn" style="left:1997px;width:147px"></div>
<div class="tbtn" style="left:2143.5px;width:138.500px"></div>
<div class="tbtn" style="left:2281.5px;width:191.500px;"></div>
<svg class="ic" style="left:2027.23px;top:201.97px" width="20.45" height="20.45" viewBox="0 0 512 512"><path fill="#0650c4" d="M487.976 0H24.028C2.710 0-8.047 25.866 7.058 40.971L192 225.941V432c0 7.831 3.821 15.170 10.237 19.662l80 55.980C298.020 518.690 320 507.493 320 487.980V225.941l184.947-184.970C520.021 25.896 509.338 0 487.976 0z"/></svg>
<span class="t " id="t27" style="left:2058.20px;top:202.00px;color:#0650c4;font-size:21px;font-weight:700;-webkit-text-stroke:0;letter-spacing:0.320px;">Filter</span>
<svg class="ic" style="left:2172px;top:201px" width="26" height="23" viewBox="2172 201 26 23"><g fill="none" stroke="#0650c4" stroke-width="2.200" stroke-linecap="butt"><path d="M2177.7 221.4V207" stroke-width="2.600"/><path d="M2173.700 209L2177.700 203L2181.700 209Z" fill="#0650c4" stroke="none"/><path d="M2183.500 204.300H2195.100"/><path d="M2183.500 209.300H2192.200"/><path d="M2183.500 214.500H2189.600"/><path d="M2183.500 219.700H2186.900"/></g></svg>
<span class="t " id="t28" style="left:2206.65px;top:202.00px;color:#0650c4;font-size:21px;font-weight:700;-webkit-text-stroke:0;letter-spacing:-0.100px;">Sort</span>
<svg class="ic" style="left:2311.81px;top:202.01px" width="20.99" height="20.99" viewBox="0 0 512 512"><path fill="#0650c4" d="M149.333 216v80c0 13.255-10.745 24-24 24H24c-13.255 0-24-10.745-24-24v-80c0-13.255 10.745-24 24-24h101.333c13.255 0 24 10.745 24 24zM0 376v80c0 13.255 10.745 24 24 24h101.333c13.255 0 24-10.745 24-24v-80c0-13.255-10.745-24-24-24H24c-13.255 0-24 10.745-24 24zM125.333 32H24C10.745 32 0 42.745 0 56v80c0 13.255 10.745 24 24 24h101.333c13.255 0 24-10.745 24-24V56c0-13.255-10.745-24-24-24zm80 448H488c13.255 0 24-10.745 24-24v-80c0-13.255-10.745-24-24-24H205.333c-13.255 0-24 10.745-24 24v80c0 13.255 10.745 24 24 24zm-24-424v80c0 13.255 10.745 24 24 24H488c13.255 0 24-10.745 24-24V56c0-13.255-10.745-24-24-24H205.333c-13.255 0-24 10.745-24 24zm24 264H488c13.255 0 24-10.745 24-24v-80c0-13.255-10.745-24-24-24H205.333c-13.255 0-24 10.745-24 24v80c0 13.255 10.745 24 24 24z"/></svg>
<span class="t " id="t29" style="left:2343.95px;top:202.00px;color:#0650c4;font-size:21px;font-weight:700;-webkit-text-stroke:0;letter-spacing:1.042px;">Columns</span>
<div class="newbtn"></div>
<span class="t " id="t30" style="left:2511.80px;top:202.00px;color:#fff;font-size:21px;font-weight:700;-webkit-text-stroke:0;letter-spacing:0.509px;">New Resource</span>
<svg class="ic" style="left:2706.83px;top:201.88px" width="12.64" height="20.22" viewBox="0 0 320 512"><path fill="#fff" d="M31.3 192h257.300c17.800 0 26.700 21.500 14.100 34.100L174.100 354.800c-7.800 7.800-20.500 7.800-28.300 0L17.200 226.100C4.600 213.500 13.500 192 31.300 192z"/></svg>
<div class="tbl">
<div class="thead"></div>
<div class="rline" style="top:79px"></div>
<div class="rline" style="top:146px"></div>
<div class="rline" style="top:213px"></div>
<div class="rline" style="top:281px"></div>
<div class="rline" style="top:348px"></div>
<div class="cline" style="left:112px"></div>
<div class="cline" style="left:656px"></div>
<div class="cline" style="left:976px"></div>
<div class="cline" style="left:1296px"></div>
<div class="cline" style="left:1616px"></div>
<div class="cline" style="left:1936px"></div>
<div class="sbtrack"></div><div class="sbthumb"></div><div class="stickyline"></div>
</div>
<span class="cb" style="left:685px;top:280px"></span>
<svg class="ic" style="left:767.96px;top:282.45px" width="18.29" height="20.90" viewBox="0 0 448 512"><path fill="#15181e" d="M437.2 403.5L320 215V64h8c13.3 0 24-10.7 24-24V24c0-13.3-10.7-24-24-24H120c-13.3 0-24 10.7-24 24v16c0 13.3 10.7 24 24 24h8v151L10.8 403.5C-18.5 450.6 15.3 512 70.9 512h306.2c55.700 0 89.400-61.500 60.100-108.500zM137.900 320l48.200-77.600c3.700-5.200 5.800-11.600 5.800-18.400V64h64v160c0 6.900 2.200 13.200 5.800 18.400l48.200 77.600h-172z"/></svg>
<span class="t " id="t31" style="left:799.90px;top:283.00px;color:#15181e;font-size:22.0px;-webkit-text-stroke:0.8px currentColor;letter-spacing:0.443px;">Resource</span>
<svg class="ic" style="left:1309.23px;top:282.79px" width="23.53" height="20.92" viewBox="0 0 576 512"><path fill="#15181e" d="M560 288h-80v96l-32-21.300-32 21.300v-96h-80c-8.800 0-16 7.200-16 16v192c0 8.800 7.200 16 16 16h224c8.800 0 16-7.200 16-16V304c0-8.800-7.200-16-16-16zm-384-64h224c8.800 0 16-7.200 16-16V16c0-8.800-7.200-16-16-16h-80v96l-32-21.300L256 96V0h-80c-8.800 0-16 7.200-16 16v192c0 8.800 7.200 16 16 16zm64 64h-80v96l-32-21.300L96 384v-96H16c-8.800 0-16 7.200-16 16v192c0 8.800 7.200 16 16 16h224c8.800 0 16-7.200 16-16V304c0-8.800-7.200-16-16-16z"/></svg>
<span class="t " id="t32" style="left:1345.70px;top:283.00px;color:#15181e;font-size:22.0px;-webkit-text-stroke:0.8px currentColor;letter-spacing:0.811px;">Available Items</span>
<svg class="ic" style="left:1634.00px;top:282.80px" width="24" height="22" viewBox="0 0 24 22"><path fill="#15181e" d="M0 20.6V1.9C0 .85.85 0 1.9 0h12c1.050 0 1.900.85 1.900 1.900V20.600L7.900 16.100z"/><g transform="translate(12.5,1.300) scale(0.01920,0.01641)"><path d="M437.2 403.5L320 215V64h8c13.3 0 24-10.7 24-24V24c0-13.3-10.7-24-24-24H120c-13.3 0-24 10.7-24 24v16c0 13.3 10.7 24 24 24h8v151L10.8 403.5C-18.5 450.6 15.3 512 70.9 512h306.2c55.700 0 89.400-61.500 60.100-108.500zM137.900 320l48.200-77.600c3.700-5.200 5.800-11.600 5.800-18.400V64h64v160c0 6.900 2.200 13.200 5.800 18.400l48.200 77.600h-172z" fill="#e9edf5" stroke="#e9edf5" stroke-width="210" stroke-linejoin="round"/><path d="M437.2 403.5L320 215V64h8c13.3 0 24-10.7 24-24V24c0-13.3-10.7-24-24-24H120c-13.3 0-24 10.7-24 24v16c0 13.3 10.7 24 24 24h8v151L10.8 403.5C-18.5 450.6 15.3 512 70.9 512h306.2c55.700 0 89.400-61.500 60.100-108.500zM137.900 320l48.200-77.600c3.700-5.200 5.800-11.600 5.800-18.400V64h64v160c0 6.900 2.200 13.200 5.800 18.400l48.200 77.600h-172z" fill="#15181e"/></g></svg>
<span class="t " id="t33" style="left:1666.30px;top:283.00px;color:#15181e;font-size:22.0px;-webkit-text-stroke:0.8px currentColor;letter-spacing:0.950px;">Vendor</span>
<svg class="ic" style="left:1953.80px;top:282.80px" width="24" height="22" viewBox="0 0 24 22"><path fill="#15181e" d="M0 20.6V1.9C0 .85.85 0 1.9 0h12c1.050 0 1.900.85 1.900 1.900V20.600L7.900 16.100z"/><g transform="translate(12.5,1.300) scale(0.01920,0.01641)"><path d="M437.2 403.5L320 215V64h8c13.3 0 24-10.7 24-24V24c0-13.3-10.7-24-24-24H120c-13.3 0-24 10.7-24 24v16c0 13.3 10.7 24 24 24h8v151L10.8 403.5C-18.5 450.6 15.3 512 70.9 512h306.2c55.700 0 89.400-61.500 60.100-108.500zM137.900 320l48.200-77.600c3.700-5.200 5.800-11.600 5.800-18.400V64h64v160c0 6.900 2.200 13.200 5.800 18.400l48.200 77.600h-172z" fill="#e9edf5" stroke="#e9edf5" stroke-width="210" stroke-linejoin="round"/><path d="M437.2 403.5L320 215V64h8c13.3 0 24-10.7 24-24V24c0-13.3-10.7-24-24-24H120c-13.3 0-24 10.7-24 24v16c0 13.3 10.7 24 24 24h8v151L10.8 403.5C-18.5 450.6 15.3 512 70.9 512h306.2c55.700 0 89.400-61.500 60.100-108.500zM137.900 320l48.200-77.600c3.700-5.200 5.800-11.600 5.800-18.400V64h64v160c0 6.900 2.200 13.200 5.800 18.400l48.200 77.600h-172z" fill="#15181e"/></g></svg>
<span class="t " id="t34" style="left:1984.55px;top:283.00px;color:#15181e;font-size:22.0px;-webkit-text-stroke:0.8px currentColor;letter-spacing:2.029px;">Catalog#</span>
<svg class="ic" style="left:2274.00px;top:282.80px" width="24" height="22" viewBox="0 0 24 22"><path fill="#15181e" d="M0 20.6V1.9C0 .85.85 0 1.9 0h12c1.050 0 1.900.85 1.900 1.900V20.600L7.900 16.100z"/><g transform="translate(12.5,1.300) scale(0.01920,0.01641)"><path d="M437.2 403.5L320 215V64h8c13.3 0 24-10.7 24-24V24c0-13.3-10.7-24-24-24H120c-13.3 0-24 10.7-24 24v16c0 13.3 10.7 24 24 24h8v151L10.8 403.5C-18.5 450.6 15.3 512 70.9 512h306.2c55.700 0 89.400-61.500 60.100-108.500zM137.900 320l48.200-77.600c3.700-5.200 5.800-11.600 5.800-18.400V64h64v160c0 6.900 2.200 13.200 5.800 18.400l48.200 77.600h-172z" fill="#e9edf5" stroke="#e9edf5" stroke-width="210" stroke-linejoin="round"/><path d="M437.2 403.5L320 215V64h8c13.3 0 24-10.7 24-24V24c0-13.3-10.7-24-24-24H120c-13.3 0-24 10.7-24 24v16c0 13.3 10.7 24 24 24h8v151L10.8 403.5C-18.5 450.6 15.3 512 70.9 512h306.2c55.700 0 89.400-61.500 60.100-108.500zM137.900 320l48.200-77.600c3.700-5.200 5.800-11.600 5.800-18.400V64h64v160c0 6.900 2.200 13.200 5.800 18.400l48.200 77.600h-172z" fill="#15181e"/></g></svg>
<span class="t " id="t35" style="left:2304.10px;top:283.00px;color:#15181e;font-size:22.0px;-webkit-text-stroke:0.8px currentColor;letter-spacing:0.514px;">For use with</span>
<svg class="ic" style="left:2594.00px;top:282.80px" width="24" height="22" viewBox="0 0 24 22"><path fill="#15181e" d="M0 20.6V1.9C0 .85.85 0 1.9 0h12c1.050 0 1.900.85 1.900 1.900V20.600L7.900 16.100z"/><g transform="translate(12.5,1.300) scale(0.01920,0.01641)"><path d="M437.2 403.5L320 215V64h8c13.3 0 24-10.7 24-24V24c0-13.3-10.7-24-24-24H120c-13.3 0-24 10.7-24 24v16c0 13.3 10.7 24 24 24h8v151L10.8 403.5C-18.5 450.6 15.3 512 70.9 512h306.2c55.700 0 89.400-61.500 60.100-108.500zM137.900 320l48.200-77.600c3.700-5.200 5.800-11.600 5.800-18.400V64h64v160c0 6.900 2.200 13.200 5.800 18.400l48.200 77.600h-172z" fill="#e9edf5" stroke="#e9edf5" stroke-width="210" stroke-linejoin="round"/><path d="M437.2 403.5L320 215V64h8c13.3 0 24-10.7 24-24V24c0-13.3-10.7-24-24-24H120c-13.3 0-24 10.7-24 24v16c0 13.3 10.7 24 24 24h8v151L10.8 403.5C-18.5 450.6 15.3 512 70.9 512h306.2c55.700 0 89.400-61.500 60.100-108.500zM137.900 320l48.200-77.600c3.700-5.200 5.800-11.600 5.800-18.400V64h64v160c0 6.900 2.200 13.200 5.800 18.400l48.200 77.600h-172z" fill="#15181e"/></g></svg>
<span class="t " id="t36" style="left:2625.00px;top:283.00px;color:#15181e;font-size:22.0px;-webkit-text-stroke:0.8px currentColor;letter-spacing:1.850px;">pH</span>
<span class="cb" style="left:683px;top:352px"></span>
<span class="t " id="t37" style="left:764.15px;top:354.00px;color:#0650c4;font-size:25.0px;-webkit-text-stroke:0.8px currentColor;letter-spacing:0.596px;">Gibco™ HBSS, no calcium, no magnesi…</span>
<span class="t " id="t38" style="left:1308.00px;top:356.00px;color:#0650c4;font-size:23.0px;">5</span>
<span class="t " id="t39" style="left:1626.50px;top:356.00px;color:#15181e;font-size:23.0px;letter-spacing:0.716px;">Fisher Scientific</span>
<span class="t " id="t40" style="left:1947.45px;top:356.00px;color:#15181e;font-size:23.0px;letter-spacing:-0.071px;">12082739</span>
<span class="t " id="t41" style="left:2266.80px;top:356.00px;color:#15181e;font-size:23.0px;letter-spacing:0.992px;">Mammalian Cell Cultu…</span>
<span class="t " id="t42" style="left:2588.05px;top:356.00px;color:#15181e;font-size:23.0px;letter-spacing:0.106px;">6.7 to 7.8</span>
<span class="cb" style="left:683px;top:419px"></span>
<span class="t " id="t43" style="left:764.65px;top:421.00px;color:#0650c4;font-size:25.0px;-webkit-text-stroke:0.8px currentColor;letter-spacing:0.632px;">Tween™ 80, Fisher BioReagents</span>
<span class="t " id="t44" style="left:1308.00px;top:423.00px;color:#0650c4;font-size:23.0px;">5</span>
<span class="t " id="t45" style="left:1626.50px;top:423.00px;color:#15181e;font-size:23.0px;letter-spacing:0.716px;">Fisher Scientific</span>
<span class="t " id="t46" style="left:1947.95px;top:423.00px;color:#15181e;font-size:23.0px;letter-spacing:1.262px;">23456</span>
<span class="t " id="t47" style="left:2266.80px;top:423.00px;color:#7f8896;font-size:23.0px;letter-spacing:0.675px;">Enter</span>
<span class="t " id="t48" style="left:2588.05px;top:423.00px;color:#15181e;font-size:23.0px;">6</span>
<span class="cb" style="left:683px;top:487px"></span>
<span class="t " id="t49" style="left:764.15px;top:488.00px;color:#0650c4;font-size:25.0px;-webkit-text-stroke:0.8px currentColor;letter-spacing:0.596px;">Gibco™ DPBS, no calcium, no magnesi…</span>
<span class="t " id="t50" style="left:1307.25px;top:490.00px;color:#0650c4;font-size:23.0px;letter-spacing:-0.800px;">10</span>
<span class="t " id="t51" style="left:1626.50px;top:490.00px;color:#15181e;font-size:23.0px;letter-spacing:0.716px;">Fisher Scientific</span>
<span class="t " id="t52" style="left:1948.20px;top:490.00px;color:#15181e;font-size:23.0px;letter-spacing:0.917px;">0887262</span>
<span class="t " id="t53" style="left:2266.80px;top:490.00px;color:#7f8896;font-size:23.0px;letter-spacing:0.675px;">Enter</span>
<span class="t " id="t54" style="left:2587.30px;top:490.00px;color:#7f8896;font-size:23.0px;letter-spacing:0.425px;">Enter</span>
<span class="cb" style="left:683px;top:554px"></span>
<span class="t " id="t55" style="left:764.65px;top:555.00px;color:#0650c4;font-size:25.0px;-webkit-text-stroke:0.8px currentColor;letter-spacing:0.853px;">Tris Base (White Crystals or Crystallin…</span>
<span class="t " id="t56" style="left:1307.25px;top:557.00px;color:#0650c4;font-size:23.0px;letter-spacing:-0.800px;">10</span>
<span class="t " id="t57" style="left:1626.50px;top:557.00px;color:#15181e;font-size:23.0px;letter-spacing:0.716px;">Fisher Scientific</span>
<span class="t " id="t58" style="left:1948.20px;top:557.00px;color:#15181e;font-size:23.0px;letter-spacing:1.137px;">98764</span>
<span class="t " id="t59" style="left:2266.80px;top:557.00px;color:#7f8896;font-size:23.0px;letter-spacing:0.675px;">Enter</span>
<span class="t " id="t60" style="left:2587.55px;top:557.00px;color:#15181e;font-size:23.0px;letter-spacing:-1.250px;">10.4</span>
</main>
<svg class="ic" style="left:1034px;top:88px;filter:drop-shadow(.5px 2px 2px rgba(0,0,0,.38))" width="32" height="44" viewBox="1034 88 32 44">
<path d="M1041.9 95.8V116.8L1046.3 112.8L1051.2 123.8L1054.9 122.100L1050.3 111.900H1057.900Z" fill="#000" stroke="#fff" stroke-width="3.600" stroke-linejoin="miter" paint-order="stroke"/></svg>
<div class="vig"></div><div class="vig2"></div>
</body>
</html>
